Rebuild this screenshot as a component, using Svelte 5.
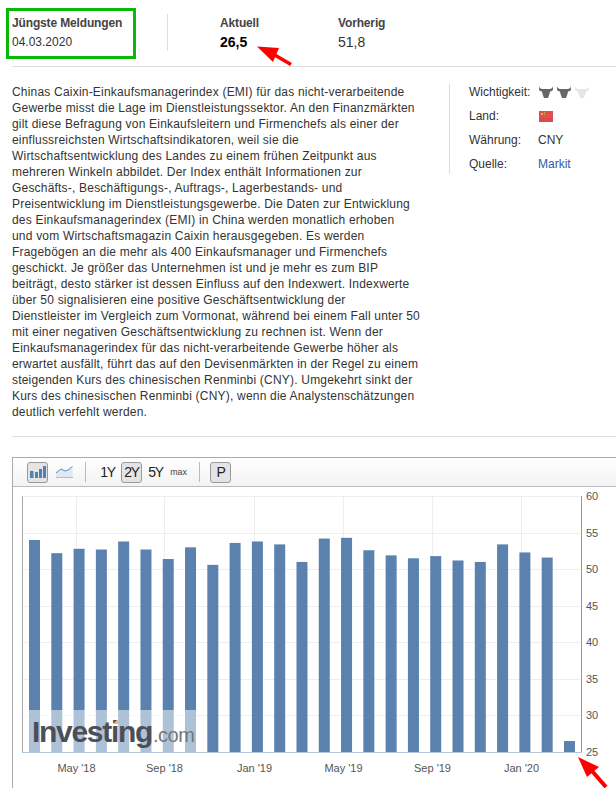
<script>
  const values = [54.0, 52.2, 52.8, 52.7, 53.8, 52.7, 51.4, 53.0, 50.6, 53.6, 53.8, 53.4, 51.0, 54.2, 54.3, 52.6, 51.9, 51.5, 51.8, 51.2, 51.0, 53.4, 52.3, 51.6, 26.5];
  const barX = (i) => 29 + i * 22.29;
  const valueY = (v) => 752 - (v - 25) * 7.31;
  const ticks = [60, 55, 50, 45, 40, 35, 30, 25];
  const months = [
    { label: "May '18", x: 76.5 },
    { label: "Sep '18", x: 164.5 },
    { label: "Jan '19", x: 254.5 },
    { label: "May '19", x: 343.5 },
    { label: "Sep '19", x: 432.5 },
    { label: "Jan '20", x: 521.5 }
  ];
  const info = [
    { label: "Wichtigkeit:", type: "bulls" },
    { label: "Land:", type: "flag" },
    { label: "Währung:", type: "text", value: "CNY" },
    { label: "Quelle:", type: "link", value: "Markit" }
  ];
  const lines = [
    "Chinas Caixin-Einkaufsmanagerindex (EMI) für das nicht-verarbeitende",
    "Gewerbe misst die Lage im Dienstleistungssektor. An den Finanzmärkten",
    "gilt diese Befragung von Einkaufsleitern und Firmenchefs als einer der",
    "einflussreichsten Wirtschaftsindikatoren, weil sie die",
    "Wirtschaftsentwicklung des Landes zu einem frühen Zeitpunkt aus",
    "mehreren Winkeln abbildet. Der Index enthält Informationen zur",
    "Geschäfts-, Beschäftigungs-, Auftrags-, Lagerbestands- und",
    "Preisentwicklung im Dienstleistungsgewerbe. Die Daten zur Entwicklung",
    "des Einkaufsmanagerindex (EMI) in China werden monatlich erhoben",
    "und vom Wirtschaftsmagazin Caixin herausgegeben. Es werden",
    "Fragebögen an die mehr als 400 Einkaufsmanager und Firmenchefs",
    "geschickt. Je größer das Unternehmen ist und je mehr es zum BIP",
    "beiträgt, desto stärker ist dessen Einfluss auf den Indexwert. Indexwerte",
    "über 50 signalisieren eine positive Geschäftsentwicklung der",
    "Dienstleister im Vergleich zum Vormonat, während bei einem Fall unter 50",
    "mit einer negativen Geschäftsentwicklung zu rechnen ist. Wenn der",
    "Einkaufsmanagerindex für das nicht-verarbeitende Gewerbe höher als",
    "erwartet ausfällt, führt das auf den Devisenmärkten in der Regel zu einem",
    "steigenden Kurs des chinesischen Renminbi (CNY). Umgekehrt sinkt der",
    "Kurs des chinesischen Renminbi (CNY), wenn die Analystenschätzungen",
    "deutlich verfehlt werden."
  ];
</script>

<div class="page">
  <div class="head">
    <div class="col latest">
      <div class="title">Jüngste Meldungen</div>
      <div class="val small">04.03.2020</div>
    </div>
    <div class="col actual">
      <div class="title">Aktuell</div>
      <div class="val strong">26,5</div>
    </div>
    <div class="col previous">
      <div class="title">Vorherig</div>
      <div class="val">51,8</div>
    </div>
  </div>

  <div class="main">
    <p class="text">
      {#each lines as line}
        <span class="line">{line}</span>
      {/each}
    </p>

    <div class="info">
      {#each info as row}
        <div class="row">
          <span class="label">{row.label}</span>
          {#if row.type === "bulls"}
            <span class="bulls">
              {#each [true, true, false] as on}
                <svg class="bull" class:off={!on} viewBox="0 0 14 12" width="14" height="12">
                  <path d="M0.5 0 C0.5 2 1.5 3 3.5 3 L10.5 3 C12.5 3 13.5 2 13.5 0 L14 3 C14 4.5 13 5.5 11 5.5 L10.5 8 L9 12 L5 12 L3.5 8 L3 5.5 C1 5.5 0 4.5 0 3 Z" />
                </svg>
              {/each}
            </span>
          {:else if row.type === "flag"}
            <svg class="flag" viewBox="0 0 14 11" width="14" height="11">
              <rect width="14" height="11" fill="#df5050" />
              <rect y="7" width="14" height="4" fill="#da4a4a" />
              <rect x="2" y="2" width="2" height="2" fill="#e9b04e" />
              <rect x="5" y="1" width="1" height="1" fill="#e9b04e" />
              <rect x="5" y="3" width="1" height="1" fill="#e9b04e" />
            </svg>
          {:else if row.type === "link"}
            <a class="link" href="#top">{row.value}</a>
          {:else}
            <span>{row.value}</span>
          {/if}
        </div>
      {/each}
    </div>
  </div>

  <div class="rule"></div>

  <div class="chart">
    <div class="toolbar">
      <button class="tool on icon" aria-label="Balken">
        <svg viewBox="0 0 16 12" width="16" height="12">
          <rect x="0" y="5" width="3.5" height="7" fill="#4f81b5" />
          <rect x="5" y="6" width="3" height="6" fill="#4f81b5" />
          <rect x="9" y="3" width="3" height="9" fill="#4f81b5" />
          <rect x="13" y="0" width="3" height="12" fill="#4f81b5" />
        </svg>
      </button>
      <button class="tool icon" aria-label="Linie">
        <svg viewBox="0 0 17 12" width="17" height="12">
          <path d="M0 7 L5 3 L9 5 L12 4 L16.5 0.5 L16.5 11 L0 11 Z" fill="#dfe8f3" />
          <path d="M0 7 L5 3 L9 5 L12 4 L16.5 0.5" fill="none" stroke="#5c8dc0" stroke-width="1" />
          <path d="M0 11.5 H17" stroke="#a9bdd4" stroke-width="1" />
        </svg>
      </button>
      <span class="sep first"></span>
      <button class="tool range">1Y</button>
      <button class="tool range on">2Y</button>
      <button class="tool range">5Y</button>
      <button class="tool max">max</button>
      <span class="sep"></span>
      <button class="tool range on">P</button>
    </div>

    <svg class="plot" viewBox="13 487 603 301" width="603" height="301">
      {#each ticks as t}
        <line x1="23" x2="581" y1={Math.round(valueY(t)) + 0.5} y2={Math.round(valueY(t)) + 0.5} stroke="#eeeeee" />
        <text x="586" y={valueY(t) + 4} class="axis">{t}</text>
      {/each}
      {#each months as m}
        <line x1={m.x} x2={m.x} y1="496" y2="752" stroke="#eeeeee" />
        <text x={m.x} y="772" class="axis" text-anchor="middle">{m.label}</text>
      {/each}
      {#each values as v, i}
        <rect x={barX(i)} y={valueY(v)} width="11" height={752 - valueY(v)} fill="#5b82af" />
      {/each}
      <line x1="22.5" x2="22.5" y1="496" y2="752" stroke="#aaaaaa" />
      <line x1="581.5" x2="581.5" y1="496" y2="752" stroke="#999999" />
      <line x1="22" x2="582" y1="752.5" y2="752.5" stroke="#b4c6dc" />

      <rect x="23" y="710" width="174" height="42" fill="#ffffff" opacity="0.5" />
      <text x="32" y="742" class="wm">Investing</text>
      <text x="153" y="742" class="wm-com">.com</text>
      <path d="M113 724 L117.5 719.5 L118 724 Z" fill="#f4b650" />
    </svg>
  </div>

  <div class="green-box"></div>
  <svg class="arrows" viewBox="0 0 616 788" width="616" height="788">
    <path d="M291 64.5 L273 54" stroke="#ff0000" stroke-width="3.5" />
    <path d="M257 46.5 L279 48 L273 62 Z" fill="#ff0000" />
    <path d="M606 787 L592 771" stroke="#ff0000" stroke-width="4" />
    <path d="M578 757 L599 767 L587 777 Z" fill="#ff0000" />
  </svg>
</div>

<style>
  :global(body) {
    margin: 0;
    background: #fff;
  }
  .page {
    position: relative;
    width: 616px;
    height: 788px;
    overflow: hidden;
    padding-left: 12px;
    box-sizing: border-box;
    font-family: "Liberation Sans", Arial, sans-serif;
    font-size: 12px;
    color: #333;
  }
  .head {
    display: flex;
    height: 67px;
    box-sizing: border-box;
    padding-top: 14px;
    border-bottom: 1px solid #ddd;
  }
  .col {
    height: 37px;
  }
  .latest {
    width: 155px;
    border-right: 1px solid #ddd;
  }
  .actual {
    margin-left: 52px;
    width: 118px;
  }
  .title {
    font-weight: bold;
    line-height: 19px;
    letter-spacing: -0.15px;
    color: #444;
  }
  .val {
    font-size: 14px;
    line-height: 20px;
    margin-top: -1px;
  }
  .val.small {
    font-size: 12px;
  }
  .val.strong {
    font-weight: bold;
    color: #000;
  }
  .main {
    display: flex;
    padding-top: 17px;
  }
  .text {
    width: 405px;
    flex: none;
    margin: 0;
    line-height: 16px;
    letter-spacing: 0.2px;
  }
  .line {
    display: block;
    white-space: nowrap;
  }
  .info {
    margin-left: 32px;
    height: 90px;
    padding-left: 19px;
    border-left: 1px solid #ddd;
    display: flex;
    flex-direction: column;
  }
  .row {
    display: flex;
    flex: none;
    align-items: center;
    height: 24px;
    position: relative;
    top: -4px;
  }
  .label {
    width: 69px;
  }
  .bulls {
    display: flex;
    gap: 4px;
    margin-left: 1px;
  }
  .flag {
    margin-left: 1px;
  }
  .bull {
    fill: #666;
  }
  .bull.off {
    fill: #e6e6e6;
  }
  .link {
    color: #2a5db0;
    text-decoration: none;
  }
  .rule {
    height: 1px;
    background: #ddd;
    margin-top: 16px;
  }
  .chart {
    margin-top: 20px;
    border-top: 1px solid #aaa;
    border-left: 1px solid #aaa;
    height: 400px;
  }
  .toolbar {
    display: flex;
    align-items: center;
    height: 29px;
    box-sizing: border-box;
    padding-left: 14px;
    background: linear-gradient(#fff, #f3f3f3);
    border-bottom: 1px solid #bbb;
  }
  .tool {
    display: flex;
    align-items: center;
    justify-content: center;
    height: 21px;
    padding: 0;
    border: 1px solid transparent;
    border-radius: 3px;
    background: none;
    font-family: inherit;
    font-size: 14px;
    letter-spacing: -1.4px;
    color: #222;
  }
  .tool.on {
    background: #e4e4e4;
    border-color: #999;
  }
  .tool.icon {
    width: 21px;
    margin-right: 6px;
  }
  .tool.range {
    width: 21px;
    margin-right: 3px;
  }
  .tool.max {
    font-size: 9px;
    letter-spacing: -0.2px;
    width: 15px;
    margin-left: 2px;
    margin-right: 13px;
    color: #444;
  }
  .sep {
    width: 1px;
    height: 20px;
    background: #bbb;
    margin-right: 10px;
  }
  .sep.first {
    margin-left: 4px;
    margin-right: 11px;
  }
  .plot {
    display: block;
  }
  .axis {
    font-family: "Liberation Sans", Arial, sans-serif;
    font-size: 11px;
    fill: #555;
  }
  .wm {
    font-family: "Liberation Sans", Arial, sans-serif;
    font-size: 30px;
    font-weight: bold;
    letter-spacing: -1.3px;
    fill: #4b4f57;
  }
  .wm-com {
    font-family: "Liberation Sans", Arial, sans-serif;
    font-size: 20px;
    letter-spacing: -0.5px;
    fill: #777;
  }
  .green-box {
    position: absolute;
    left: 6px;
    top: 8px;
    width: 124px;
    height: 45px;
    border: 3px solid #0ab80a;
  }
  .arrows {
    position: absolute;
    left: 0;
    top: 0;
    pointer-events: none;
  }
</style>
